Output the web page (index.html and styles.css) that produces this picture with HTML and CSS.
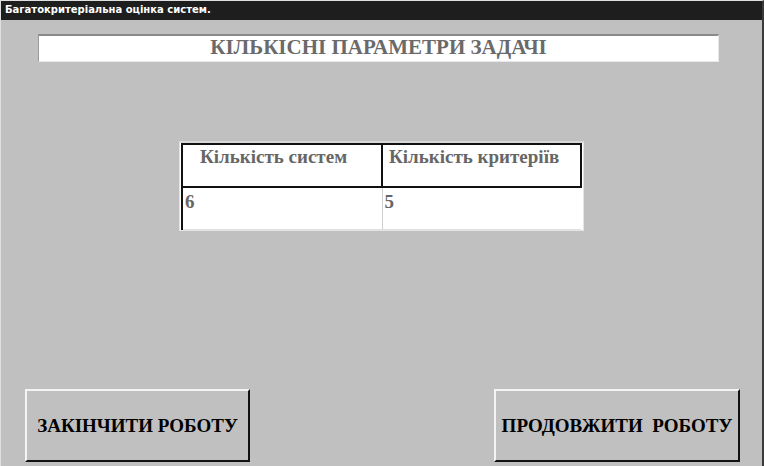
FILE: index.html
```html
<!DOCTYPE html>
<html lang="uk">
<head>
  <meta charset="UTF-8" />
  <title>Багатокритеріальна оцінка систем.</title>
  <link rel="stylesheet" href="styles.css">
</head>
<body>

  <div class="window">
    <div class="titlebar">Багатокритеріальна оцінка систем.</div>

    <div class="header-box">КІЛЬКІСНІ ПАРАМЕТРИ ЗАДАЧІ</div>

    <div class="table-wrap">
      <table>
        <colgroup>
          <col class="c1">
          <col class="c2">
        </colgroup>
        <thead>
          <tr>
            <th class="col-1">Кількість систем</th>
            <th class="col-2">Кількість критеріїв</th>
          </tr>
        </thead>
        <tbody>
          <tr>
            <td>6</td>
            <td>5</td>
          </tr>
        </tbody>
      </table>
    </div>

    <div class="buttons">
      <button class="btn btn-stop">ЗАКІНЧИТИ РОБОТУ</button>
      <button class="btn btn-go">ПРОДОВЖИТИ&nbsp; РОБОТУ</button>
    </div>
  </div>

</body>
</html>
```

FILE: styles.css
```css
html, body {
  margin: 0;
  padding: 0;
}

body {
  width: 764px;
  height: 466px;
  overflow: hidden;
  background: #c0c0c0;
}

.window {
  box-sizing: border-box;
  width: 764px;
  height: 466px;
  display: flex;
  flex-direction: column;
  background: #c0c0c0;
  border-top: 1px solid #e0e0e0;
  border-left: 1px solid #e0e0e0;
  border-right: 2px solid #3a3a3a;
}

.titlebar {
  height: 19px;
  background: #1e1e1e;
  color: #fff;
  font-family: "DejaVu Sans", sans-serif;
  font-size: 10px;
  font-weight: bold;
  line-height: 18px;
  padding-left: 4px;
}

.header-box {
  box-sizing: border-box;
  margin: 14px 0 0 37px;
  width: 681px;
  height: 28px;
  background: #fff;
  border-top: 2px solid #8a8a8a;
  border-left: 1px solid #9a9a9a;
  border-bottom: 1px solid #e8e8e8;
  border-right: 1px solid #e8e8e8;
  text-align: center;
  font-family: "Liberation Serif", serif;
  font-weight: bold;
  font-size: 21px;
  line-height: 23px;
  color: #6a6a6a;
}

.table-wrap {
  margin: 79px 0 0 178px;
  width: 405px;
  height: 90px;
  box-sizing: border-box;
  background: #fff;
  border: 1px solid #e4e4e4;
  border-top: 2px solid #d8d8d8;
  padding: 0 1px 0 1px;
  overflow: hidden;
}

table {
  width: 100%;
  table-layout: fixed;
  border-collapse: collapse;
  font-family: "Liberation Serif", serif;
  font-weight: bold;
  color: #666;
  font-size: 19px;
}

col.c1 {
  width: 200px;
}

thead tr {
  height: 43px;
}

tbody tr {
  height: 42px;
}

th {
  border: 2px solid #111;
  text-align: left;
  vertical-align: top;
  padding: 1px 0 0 6px;
  font-weight: bold;
  white-space: nowrap;
}

th.col-1 {
  padding-left: 17px;
}

td {
  vertical-align: top;
  padding: 3px 0 0 2px;
  border-left: 1px solid #d0d0d0;
  border-bottom: 1px solid #e0e0e0;
}

td:first-child {
  border-left: 2px solid #111;
}

.buttons {
  margin-top: auto;
  display: flex;
  justify-content: space-between;
  padding: 0 22px 4px 24px;
}

.btn {
  height: 73px;
  background: #c0c0c0;
  border-top: 2px solid #f4f4f4;
  border-left: 2px solid #f4f4f4;
  border-right: 2px solid #111;
  border-bottom: 2px solid #111;
  font-family: "Liberation Serif", serif;
  font-weight: bold;
  font-size: 19px;
  color: #000;
  padding: 0;
  cursor: pointer;
}

.btn-stop {
  width: 225px;
}

.btn-go {
  width: 246px;
}
```
